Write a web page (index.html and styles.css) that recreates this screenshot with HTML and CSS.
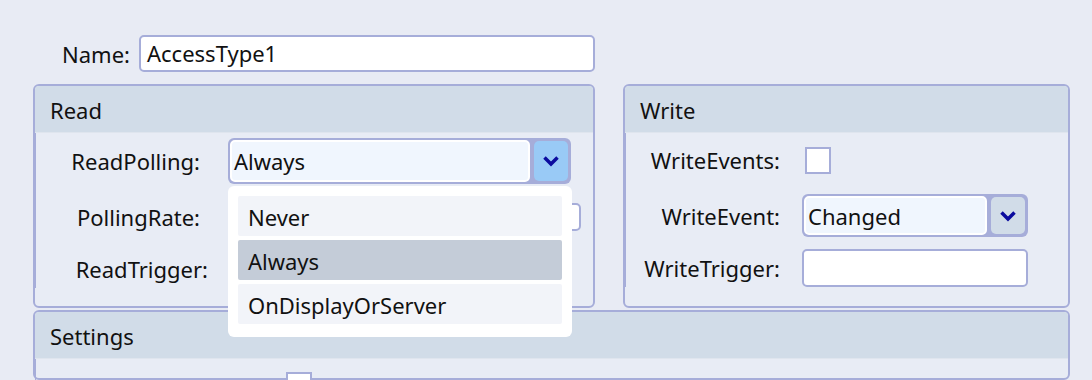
FILE: index.html
```html
<!DOCTYPE html>
<html lang="en">
<head>
    <meta charset="UTF-8">
    <title>AccessType editor</title>
    <link rel="stylesheet" href="styles.css">
</head>
<body>

    <div class="page">
        <div class="name-row">
            <label class="name-label">Name:</label>
            <div class="textbox name-box">AccessType1</div>
        </div>

        <div class="groups">
            <section class="group">
                <div class="group-header">Read</div>
                <div class="group-body read-body">
                    <span class="label">ReadPolling:</span>
                    <div class="combo-wrap">
                        <div class="combo read-combo">
                            <div class="combo-text">Always</div>
                            <div class="combo-btn hover">
                                <svg width="18" height="12" viewBox="0 0 18 12"><path d="M2.5 2.5 L9 9 L15.5 2.5" fill="none" stroke="#0b0b9e" stroke-width="3.5"/></svg>
                            </div>
                        </div>
                        <!-- open dropdown -->
                        <div class="popup">
                            <div class="item">Never</div>
                            <div class="item selected">Always</div>
                            <div class="item">OnDisplayOrServer</div>
                        </div>
                    </div>

                    <span class="label">PollingRate:</span>
                    <div class="textbox rate-box"></div>

                    <span class="label trigger-label">ReadTrigger:</span>
                    <div class="textbox read-trigger-box"></div>
                </div>
            </section>

            <section class="group">
                <div class="group-header">Write</div>
                <div class="group-body write-body">
                    <span class="label">WriteEvents:</span>
                    <div class="checkbox"></div>

                    <span class="label">WriteEvent:</span>
                    <div class="combo write-combo">
                        <div class="combo-text">Changed</div>
                        <div class="combo-btn">
                            <svg width="18" height="12" viewBox="0 0 18 12"><path d="M2.5 2.5 L9 9 L15.5 2.5" fill="none" stroke="#0b0b9e" stroke-width="3.5"/></svg>
                        </div>
                    </div>

                    <span class="label">WriteTrigger:</span>
                    <div class="textbox trigger-box"></div>
                </div>
            </section>
        </div>

        <section class="group settings">
            <div class="group-header">Settings</div>
            <div class="settings-body">
                <div class="checkbox settings-check"></div>
            </div>
        </section>
    </div>

</body>
</html>
```

FILE: styles.css
```css
body {
    margin: 0;
    padding: 0;
    background: #e8ebf4;
    font-family: 'Segoe UI', 'Noto Sans', sans-serif;
    font-size: 22px;
    color: #111;
    overflow: hidden;
    height: 380px;
}

.page {
    padding: 35px 22px 0 33px;
}

.name-row {
    display: flex;
    align-items: center;
}

.name-label {
    width: 97px;
    text-align: right;
    margin-right: 9px;
}

.textbox {
    box-sizing: border-box;
    background: #fff;
    border: 2px solid #a6add9;
    border-radius: 5px;
}

.name-box {
    width: 456px;
    height: 37px;
    padding: 0 6px;
    line-height: 33px;
}

.groups {
    display: grid;
    grid-template-columns: 562px 447px;
    column-gap: 28px;
    margin-top: 12px;
    height: 224px;
}

.group {
    box-sizing: border-box;
    border: 2px solid #a6add9;
    border-radius: 6px;
    background: #e8ecf5;
}

.group-header {
    height: 47px;
    background: #d1dce8;
    border-radius: 4px 4px 0 0;
    padding: 1px 0 0 15px;
    box-sizing: border-box;
    line-height: 46px;
    border-bottom: 1px solid #dfe5ee;
}

.group-body {
    display: grid;
    align-items: center;
    padding-top: 5px;
    border-left: 1px solid #a6add9;
}

.label {
    justify-self: end;
}

/* read column */
.read-body {
    grid-template-columns: 164px 353px;
    grid-template-rows: 46px 38px 38px;
    column-gap: 28px;
    row-gap: 14px;
}

.trigger-label {
    margin-right: -8px;
}

.rate-box {
    height: 28px;
}

.read-trigger-box {
    width: 330px;
    height: 28px;
}

.combo-wrap {
    position: relative;
    width: 343px;
    height: 46px;
}

.combo {
    box-sizing: border-box;
    display: flex;
    background: #a6add9;
    border-radius: 6px;
    padding: 2px;
}

.read-combo {
    height: 46px;
}

.write-combo {
    width: 226px;
    height: 43px;
}

.combo-text {
    flex: 1;
    box-sizing: border-box;
    background: #f0f6fe;
    border: 2px solid #fff;
    border-radius: 5px;
    padding: 0 2px;
    display: flex;
    align-items: center;
}

.combo-btn {
    width: 34px;
    margin: 1px 1px 1px 4px;
    background: #d1dce8;
    border-radius: 5px;
    display: flex;
    align-items: center;
    justify-content: center;
}

.combo-btn.hover {
    background: #99caf6;
}

.popup {
    position: absolute;
    top: 48px;
    left: 0;
    width: 344px;
    height: 151px;
    box-sizing: border-box;
    background: #fff;
    border-radius: 6px;
    padding: 10px 10px 0 10px;
    display: flex;
    flex-direction: column;
    gap: 4px;
    z-index: 5;
}

.item {
    height: 40px;
    line-height: 42px;
    padding-left: 10px;
    background: #f2f4f9;
    border-radius: 2px;
}

.item.selected {
    background: #c4ccd8;
}

/* write column */
.write-body {
    grid-template-columns: 154px 226px;
    grid-template-rows: 44px 43px 38px;
    column-gap: 22px;
    row-gap: 12px;
}

.checkbox {
    box-sizing: border-box;
    width: 26px;
    height: 27px;
    background: #fff;
    border: 2px solid #a6add9;
    margin-left: 3px;
}

.trigger-box {
    height: 38px;
}

/* settings */
.settings {
    width: 1037px;
    margin-top: 2px;
    height: 70px;
}

.settings-body {
    padding: 13px 0 0 247px;
    border-left: 1px solid #a6add9;
    height: 8px;
}
```
